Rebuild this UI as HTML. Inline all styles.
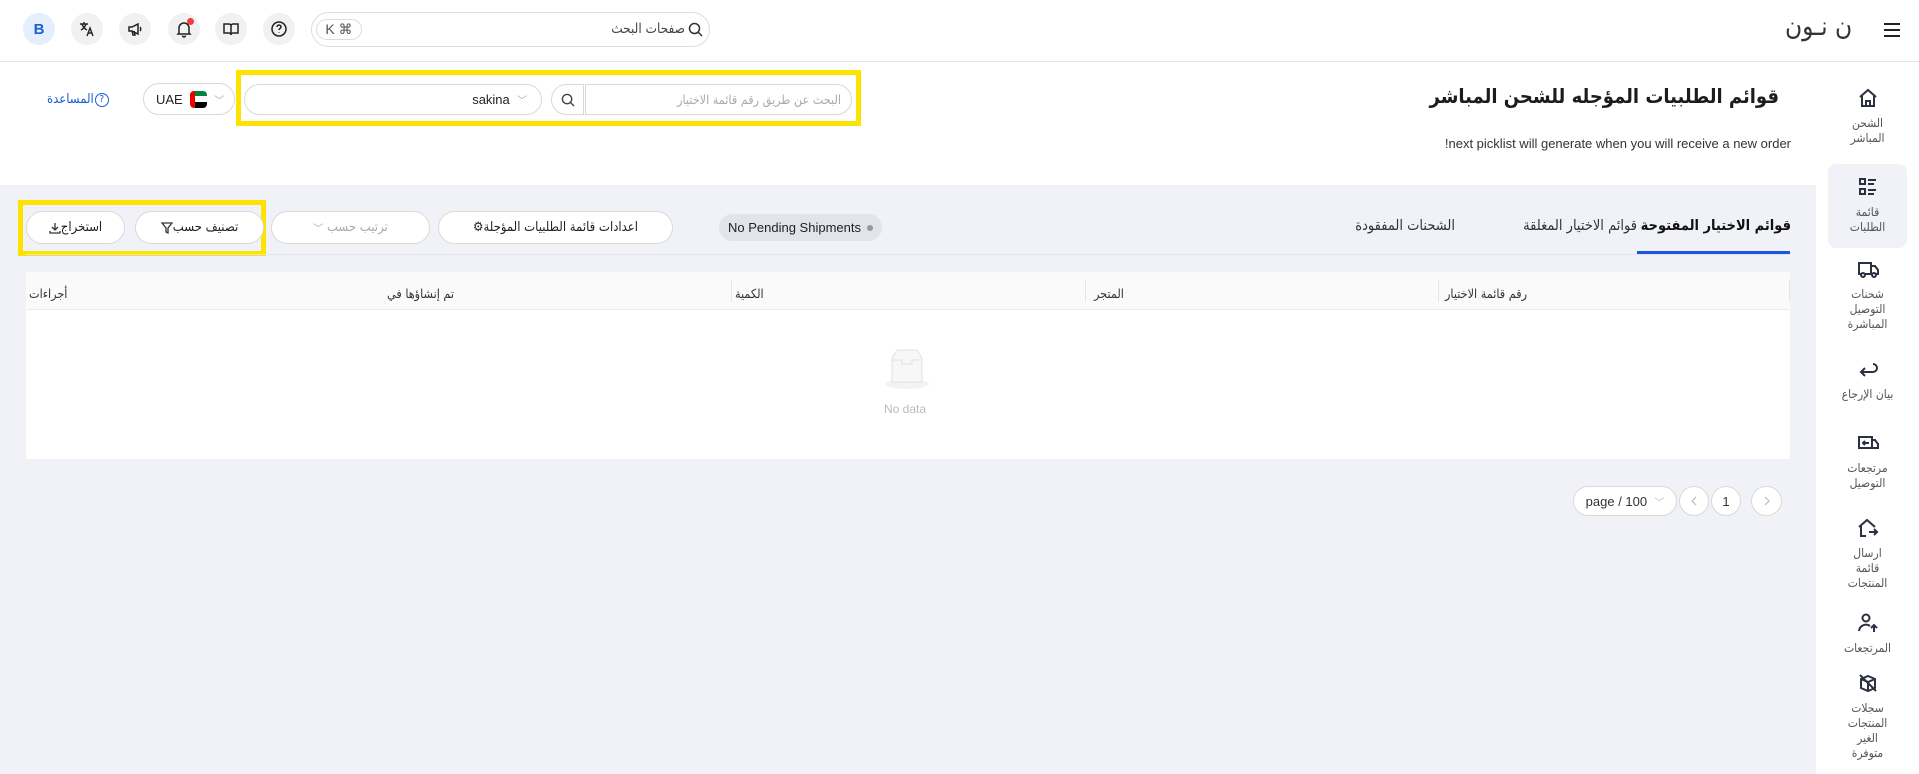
<!DOCTYPE html>
<html><head><meta charset="utf-8">
<style>
*{box-sizing:border-box;margin:0;padding:0}
body{width:1919px;height:774px;overflow:hidden;background:#fff;font-family:"Liberation Sans","DejaVu Sans",sans-serif;color:#222;position:relative}
.a{position:absolute}
.ar{font-family:"DejaVu Sans Condensed","DejaVu Sans","Liberation Sans",sans-serif}
.circ{position:absolute;width:32px;height:32px;border-radius:50%;background:#f0f1f3;display:flex;align-items:center;justify-content:center;top:13px}
.btn{position:absolute;height:33px;border:1px solid #d9d9d9;border-radius:17px;background:#fff;display:flex;align-items:center;justify-content:center;font-size:13px;color:#222;direction:ltr}
.btn span{unicode-bidi:isolate}
.sb{position:absolute;left:1828px;width:79px;text-align:center;font-size:12px;color:#555;line-height:15px}
.sb svg{display:block;margin:0 auto 8px}
.th{position:absolute;top:286px;font-size:12.5px;color:#333}
.sep{position:absolute;top:280px;width:1px;height:22px;background:#e6e6e6}
.pg{position:absolute;top:486px;height:30px;border:1px solid #d9d9d9;border-radius:15px;background:#fff;display:flex;align-items:center;justify-content:center;font-size:13px;color:#333;direction:ltr}
</style></head><body>
<!-- header -->
<div class="a" style="left:0;top:61px;width:1919px;height:1px;background:#e5e5e5"></div>
<div class="circ" style="left:23px;background:#e4eefc;color:#1a5fd6;font-size:15px;font-weight:bold">B</div>
<div class="circ" style="left:71px"><svg width="18" height="18" viewBox="0 0 18 18" fill="none" stroke="#222" stroke-width="1.4"><path d="M2 4h8M6 2v2M4 4c1 3 3 5 5 6M8 4c-1 3-3 5-5 6M9 16l3-8 3 8M10 13h4"/></svg></div>
<div class="circ" style="left:119px"><svg width="18" height="18" viewBox="0 0 18 18" fill="none" stroke="#222" stroke-width="1.5"><path d="M3 7v4h3l6 3V4L6 7z"/><path d="M6 11l1 4h2l-1-4M14 7c1 1 1 3 0 4"/></svg></div>
<div class="circ" style="left:168px"><svg width="18" height="18" viewBox="0 0 18 18" fill="none" stroke="#222" stroke-width="1.5"><path d="M4 13V8a5 5 0 0110 0v5l1 1H3zM7.5 15.5a1.5 1.5 0 003 0"/></svg><span class="a" style="right:6px;top:5px;width:7px;height:7px;border-radius:50%;background:#f03e3e"></span></div>
<div class="circ" style="left:215px"><svg width="18" height="18" viewBox="0 0 18 18" fill="none" stroke="#222" stroke-width="1.5"><path d="M2 4h5a2 2 0 012 2v9a2 2 0 00-2-2H2zM16 4h-5a2 2 0 00-2 2v9a2 2 0 012-2h5z"/></svg></div>
<div class="circ" style="left:263px"><svg width="18" height="18" viewBox="0 0 18 18" fill="none" stroke="#222" stroke-width="1.5"><circle cx="9" cy="9" r="7"/><path d="M7 7a2 2 0 114 0c0 1.5-2 1.5-2 3M9 12.5v.5"/></svg></div>
<div class="a" style="left:311px;top:12px;width:399px;height:35px;border:1px solid #ddd;border-radius:18px"></div>
<div class="a" style="left:316px;top:19px;width:46px;height:21px;border:1px solid #ddd;border-radius:11px;font-size:14px;color:#555;display:flex;align-items:center;justify-content:center">K&nbsp;⌘</div>
<div class="a ar" style="right:1234px;top:21px;font-size:13.5px;color:#444" dir="rtl">صفحات البحث</div>
<svg class="a" style="left:688px;top:22px" width="15" height="15" viewBox="0 0 15 15" fill="none" stroke="#333" stroke-width="1.5"><circle cx="6.5" cy="6.5" r="5"/><path d="M10 10l4 4"/></svg>
<div class="a ar" style="left:1785px;top:12px;font-size:26px;color:#333;letter-spacing:1px">ن نـون</div>
<svg class="a" style="left:1883px;top:22px" width="18" height="16" viewBox="0 0 18 16" stroke="#222" stroke-width="2"><path d="M1 2h16M1 8h16M1 14h16"/></svg>

<!-- title row -->
<div class="a ar" dir="rtl" style="right:140px;top:84px;font-size:20px;font-weight:bold;color:#1c1c1c">قوائم الطلبيات المؤجله للشحن المباشر</div>
<div class="a" style="right:128px;top:136px;font-size:13px;color:#333">!next picklist will generate when you will receive a new order</div>
<div class="a ar" style="left:47px;top:92px;font-size:13px;color:#1a5fd6;display:flex;align-items:center;direction:ltr"><span>المساعدة</span><span style="display:inline-block;width:14px;height:14px;border:1.3px solid #1a5fd6;border-radius:50%;font-size:10px;text-align:center;line-height:12px;margin-left:1px">?</span></div>
<div class="btn" style="left:143px;top:83px;width:92px;height:32px;justify-content:flex-start;padding-left:12px">UAE&nbsp;&nbsp;<span style="display:inline-flex;width:17px;height:17px;border-radius:4px;overflow:hidden"><span style="width:5px;background:#e00"></span><span style="flex:1;display:flex;flex-direction:column"><span style="flex:1;background:#00843d"></span><span style="flex:1;background:#fff"></span><span style="flex:1;background:#000"></span></span></span>&nbsp;&nbsp;<span style="color:#aaa;font-size:10px">﹀</span></div>
<div class="a" style="left:236px;top:70px;width:625px;height:56px;border:5px solid #fde400"></div>
<div class="btn" style="left:244px;top:84px;width:298px;height:31px;justify-content:flex-end;padding-right:14px">sakina&nbsp;&nbsp;<span style="color:#aaa;font-size:10px">﹀</span></div>
<div class="btn" style="left:551px;top:84px;width:33px;height:31px;border-radius:16px 0 0 16px"><svg width="14" height="14" viewBox="0 0 15 15" fill="none" stroke="#444" stroke-width="1.5"><circle cx="6.5" cy="6.5" r="5"/><path d="M10 10l4 4"/></svg></div>
<div class="btn ar" dir="rtl" style="left:585px;top:84px;width:267px;height:31px;border-radius:0 16px 16px 0;justify-content:flex-start;padding-right:10px;color:#aaa;font-size:12.5px;direction:rtl">البحث عن طريق رقم قائمة الاختيار</div>

<!-- gray area -->
<div class="a" style="left:0;top:185px;width:1816px;height:589px;background:#f0f2f7"></div>
<div class="a" style="left:18px;top:200px;width:248px;height:56px;border:5px solid #fde400"></div>
<div class="btn ar" style="left:26px;top:211px;width:99px"><svg width="12" height="12" viewBox="0 0 12 12" fill="none" stroke="#333" stroke-width="1.3"><path d="M6 1v7M3 5l3 3 3-3M1 9v2h10V9"/></svg><span>استخراج</span></div>
<div class="btn ar" style="left:135px;top:211px;width:129px"><svg width="12" height="12" viewBox="0 0 12 12" fill="none" stroke="#333" stroke-width="1.3"><path d="M1 1h10L7 6v5L5 10V6z"/></svg><span>تصنيف حسب</span></div>
<div class="btn ar" style="left:271px;top:211px;width:159px;color:#aaa"><span style="font-size:10px">﹀</span>&nbsp;<span>ترتيب حسب</span></div>
<div class="btn ar" style="left:438px;top:211px;width:235px"><span>⚙</span><span>اعدادات قائمة الطلبيات المؤجلة</span></div>
<div class="a" style="left:719px;top:214px;width:163px;height:27px;border-radius:14px;background:#e2e4e9;font-size:13px;color:#222;display:flex;align-items:center;justify-content:center">No Pending Shipments <span style="display:inline-block;width:6px;height:6px;border-radius:50%;background:#999;margin-left:6px"></span></div>
<div class="a ar" dir="rtl" style="right:128px;top:218px;font-size:14.5px;color:#111;font-weight:600">قوائم الاختيار المفتوحة</div>
<div class="a ar" dir="rtl" style="right:282px;top:218px;font-size:14.5px;color:#333">قوائم الاختيار المغلقة</div>
<div class="a ar" dir="rtl" style="right:464px;top:218px;font-size:14.5px;color:#333">الشحنات المفقودة</div>
<div class="a" style="left:26px;top:254px;width:1764px;height:1px;background:#e3e5ea"></div>
<div class="a" style="left:1637px;top:251px;width:153px;height:3px;background:#1a56e0"></div>

<!-- table -->
<div class="a" style="left:26px;top:272px;width:1764px;height:187px;background:#fff"></div>
<div class="a" style="left:26px;top:272px;width:1764px;height:38px;background:#fafafa;border-bottom:1px solid #ececec"></div>
<div class="sep" style="left:1438px"></div><div class="sep" style="left:1085px"></div><div class="sep" style="left:731px"></div><div class="sep" style="left:1789px"></div>
<div class="th ar" style="left:1445px">رقم قائمة الاختيار</div>
<div class="th ar" style="left:1094px">المتجر</div>
<div class="th ar" style="left:735px">الكمية</div>
<div class="th ar" style="left:387px">تم إنشاؤها في</div>
<div class="th ar" style="left:29px">أجراءات</div>
<svg class="a" style="left:882px;top:348px" width="50" height="42" viewBox="0 0 50 42"><ellipse cx="25" cy="36" rx="22" ry="5" fill="#f3f3f3"/><path d="M10 10l5-8h20l5 8v24H10z" fill="#f7f7f7" stroke="#e2e2e2"/><path d="M10 12h10v4h10v-4h10" fill="none" stroke="#e2e2e2"/></svg>
<div class="a" style="left:884px;top:402px;font-size:12px;color:#bbb">No data</div>

<!-- pagination -->
<div class="pg" style="left:1573px;width:104px">page / 100&nbsp;&nbsp;<span style="color:#bbb;font-size:10px">﹀</span></div>
<div class="pg" style="left:1679px;width:30px"><svg width="8" height="10" viewBox="0 0 8 10" fill="none" stroke="#bbb" stroke-width="1.2"><path d="M6 1L2 5l4 4"/></svg></div>
<div class="pg" style="left:1711px;width:30px">1</div>
<div class="pg" style="left:1751px;width:31px"><svg width="8" height="10" viewBox="0 0 8 10" fill="none" stroke="#bbb" stroke-width="1.2"><path d="M2 1l4 4-4 4"/></svg></div>

<!-- sidebar -->
<div class="a" style="left:1828px;top:164px;width:79px;height:84px;border-radius:8px;background:#f0f2f7"></div>
<div class="sb ar" style="top:88px"><svg width="20" height="20" viewBox="0 0 20 20" fill="none" stroke="#2b3140" stroke-width="2"><path d="M2 9l8-7 8 7M4 8v10h12V8M8 18v-5h4v5"/></svg>الشحن<br>المباشر</div>
<div class="sb ar" style="top:177px"><svg width="20" height="20" viewBox="0 0 20 20" fill="none" stroke="#2b3140" stroke-width="2"><rect x="2" y="2" width="5" height="5"/><rect x="2" y="12" width="5" height="5"/><path d="M10 3h8M10 7h6M10 13h8M10 17h6"/></svg>قائمة<br>الطلبات</div>
<div class="sb ar" style="top:259px"><svg width="22" height="20" viewBox="0 0 22 20" fill="none" stroke="#2b3140" stroke-width="2"><path d="M2 4h12v11H2zM14 7h4l3 4v4h-7"/><circle cx="6" cy="16" r="2" fill="#fff"/><circle cx="17" cy="16" r="2" fill="#fff"/></svg>شحنات<br>التوصيل<br>المباشرة</div>
<div class="sb ar" style="top:359px"><svg width="20" height="20" viewBox="0 0 20 20" fill="none" stroke="#2b3140" stroke-width="2"><path d="M15 5a4 4 0 010 8H4M7 9l-4 4 4 4"/></svg>بيان الإرجاع</div>
<div class="sb ar" style="top:433px"><svg width="22" height="20" viewBox="0 0 22 20" fill="none" stroke="#2b3140" stroke-width="2"><path d="M2 4h13v11H2zM15 7h3l3 4v4h-6"/><path d="M6 10h6M8 8l-2 2 2 2"/></svg>مرتجعات<br>التوصيل</div>
<div class="sb ar" style="top:518px"><svg width="22" height="20" viewBox="0 0 22 20" fill="none" stroke="#2b3140" stroke-width="2"><path d="M2 9l8-7 8 7M4 8v10h5M12 14h8M17 11l3 3-3 3"/></svg>ارسال<br>قائمة<br>المنتجات</div>
<div class="sb ar" style="top:613px"><svg width="22" height="20" viewBox="0 0 22 20" fill="none" stroke="#2b3140" stroke-width="2"><circle cx="9" cy="5" r="3.5"/><path d="M2 18a7 7 0 0111-5M17 19v-7M14 15l3-3 3 3"/></svg>المرتجعات</div>
<div class="sb ar" style="top:673px"><svg width="20" height="20" viewBox="0 0 20 20" fill="none" stroke="#2b3140" stroke-width="2"><path d="M3 6l7-3 7 3v9l-7 3-7-3zM3 6l7 3 7-3M10 9v9M2 2l16 16"/></svg>سجلات<br>المنتجات<br>الغير<br>متوفرة</div>
</body></html>
